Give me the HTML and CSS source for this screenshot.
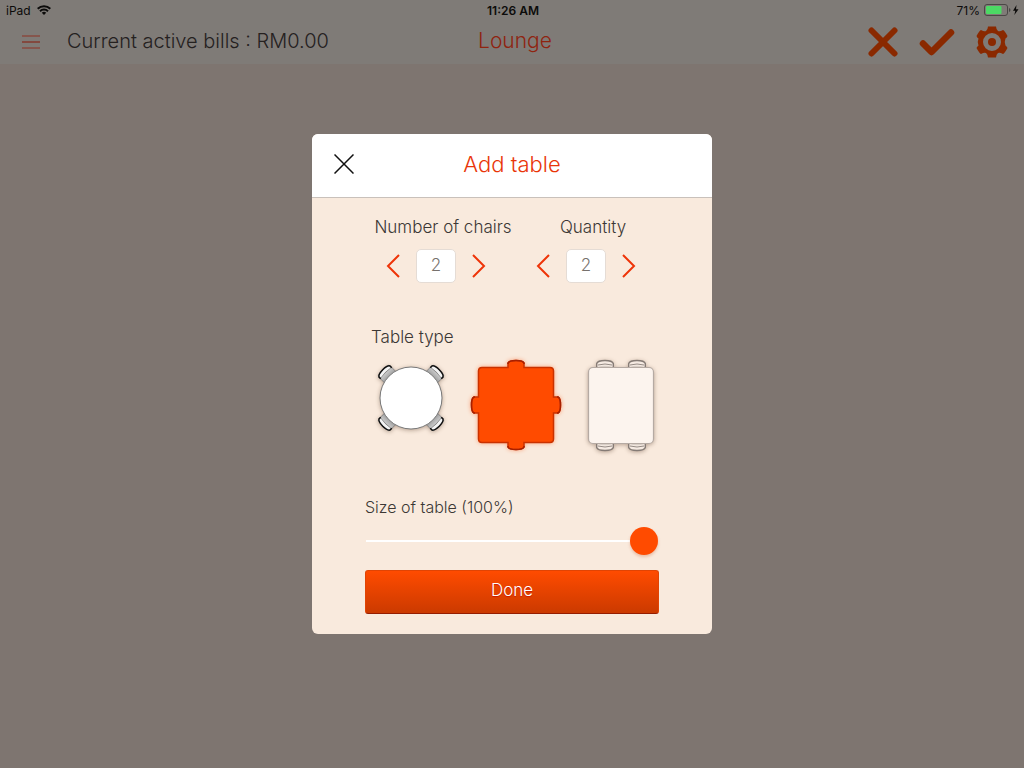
FILE: index.html
```html
<!DOCTYPE html>
<html lang="en">
<head>
<meta charset="utf-8">
<meta name="viewport" content="width=device-width, initial-scale=1">
<title>Lounge - Add table</title>
<link rel="stylesheet" href="styles.css">
</head>
<body>
<div class="app">
  <header class="topbar">
    <div class="status">
      <div class="status-left">iPad
        <svg width="14" height="10" viewBox="0 0 14 10" aria-hidden="true"><g fill="none" stroke="#0c0b0a" stroke-width="2"><path d="M.7 3.8a9 9 0 0 1 12.6 0"/><path d="M3 6.2a5.7 5.7 0 0 1 8 0"/></g><path d="M4.8 7.8a3.1 3.1 0 0 1 4.4 0L7 10z" fill="#0c0b0a"/></svg>
      </div>
      <div class="status-time">11:26 AM</div>
      <div class="status-right">71%
        <svg width="36" height="12" viewBox="0 0 36 12" aria-hidden="true"><rect x=".5" y=".5" width="23" height="11" rx="2.5" fill="none" stroke="#4a4745"/><rect x="2" y="2" width="15.500" height="8" rx="1" fill="#4cd964"/><path d="M25 4v4q1.500-.5 1.500-2T25 4z" fill="#4a4745"/><path d="M32.500 1 29 6.800h2.300L30.300 11 34.500 5.200H32z" fill="#0c0b0a"/></svg>
      </div>
    </div>
    <nav class="nav">
      <div class="nav-left">
        <button class="icon-button" aria-label="Menu"><svg width="18" height="14" viewBox="0 0 18 14"><path d="M0 1h18M0 13h18" stroke="#894b40" stroke-width="1.500"/><path d="M0 7h18" stroke="#86291a" stroke-width="1.200"/></svg></button>
        <span class="bills">Current active bills : RM0.00</span>
      </div>
      <h1 class="room">Lounge</h1>
      <div class="nav-actions">
        <button class="icon-button" aria-label="Cancel"><svg width="30" height="30" viewBox="0 0 30 30"><path d="M3.500 3.500l23 23M26.500 3.500l-23 23" stroke="#8a2900" stroke-width="6" stroke-linecap="round"/></svg></button>
        <button class="icon-button" aria-label="Confirm"><svg width="36" height="28" viewBox="0 0 36 28"><path d="M4 15.500l8.500 8.500L32 4.500" fill="none" stroke="#8a2900" stroke-width="6.500" stroke-linecap="round" stroke-linejoin="round"/></svg></button>
        <button class="icon-button" aria-label="Settings"><svg width="32" height="32" viewBox="0 0 32 32"><path fill="#8a2900" fill-rule="evenodd" d="M12 .5h8q.3 3.500 2 4.500t5-1q1.500.5 4.500 6-.5 1.500-2 2.500-1.500 3.500 0 7 1.500 1 2 2.500-3 5.500-4.500 6-3.300-2-5-1t-2 4.500h-8q-.3-3.500-2-4.500t-5 1Q3.500 27.500.5 22q.5-1.500 2-2.500-1.500-3.500 0-7Q1 11.500.5 10q3-5.500 4.500-6 3.300 2 5 1t2-4.500zM16 7a9 9 0 1 0 0 18a9 9 0 0 0 0-18z"/><circle cx="16" cy="16" r="4" fill="#8a2900"/></svg></button>
      </div>
    </nav>
  </header>

  <main class="stage">
    <form class="dialog" role="dialog" aria-labelledby="dialog-title">
      <div class="dialog-head">
        <button type="button" class="icon-button" aria-label="Close"><svg width="20" height="20" viewBox="0 0 20 20"><path d="M.5.5l19 19M19.500.5l-19 19" stroke="#111" stroke-width="1.500"/></svg></button>
        <h2 class="dialog-title" id="dialog-title">Add table</h2>
      </div>
      <div class="dialog-body">
        <div class="counters">
          <div class="counter">
            <label for="chairs">Number of chairs</label>
            <div class="stepper">
              <button type="button" class="icon-button" aria-label="Fewer chairs"><svg width="14" height="24" viewBox="0 0 14 24"><path d="M13 1 2 12l11 11" fill="none" stroke="#ee3408" stroke-width="2"/></svg></button>
              <input id="chairs" class="count" type="text" inputmode="numeric" value="2">
              <button type="button" class="icon-button" aria-label="More chairs"><svg width="14" height="24" viewBox="0 0 14 24"><path d="M1 1l11 11L1 23" fill="none" stroke="#ee3408" stroke-width="2"/></svg></button>
            </div>
          </div>
          <div class="counter">
            <label for="quantity">Quantity</label>
            <div class="stepper">
              <button type="button" class="icon-button" aria-label="Lower quantity"><svg width="14" height="24" viewBox="0 0 14 24"><path d="M13 1 2 12l11 11" fill="none" stroke="#ee3408" stroke-width="2"/></svg></button>
              <input id="quantity" class="count" type="text" inputmode="numeric" value="2">
              <button type="button" class="icon-button" aria-label="Higher quantity"><svg width="14" height="24" viewBox="0 0 14 24"><path d="M1 1l11 11L1 23" fill="none" stroke="#ee3408" stroke-width="2"/></svg></button>
            </div>
          </div>
        </div>

        <fieldset class="types">
          <legend class="types-label">Table type</legend>
          <div class="type-list">
            <label class="type">
              <input type="radio" name="type" value="round" aria-label="Round table">
              <svg class="shape" width="100" height="100" viewBox="0 0 100 100">
                <defs>
                  <linearGradient id="cushion" x2="0" y2="1"><stop stop-color="#ccc"/><stop offset="1" stop-color="#888"/></linearGradient>
                  <g id="seat"><path d="M-8-27v-9H8v9z" fill="url(#cushion)" stroke="#777" stroke-width=".7"/><path d="M-7.500-35.500q7.500-1.500 15 0v-3.500q-7.500-1.500-15 0z" fill="#f4f4f4" stroke="#777" stroke-width=".6"/><path d="M-7.800-35v-2.500q1.500-2.500 7.800-2.500t7.800 2.500v2.500" fill="none" stroke="#111" stroke-width="1.500"/></g>
                </defs>
                <g transform="translate(50 43)">
                  <use href="#seat" transform="rotate(45)"/><use href="#seat" transform="rotate(135)"/><use href="#seat" transform="rotate(225)"/><use href="#seat" transform="rotate(315)"/>
                  <circle r="31" fill="#fff" stroke="#777"/>
                </g>
              </svg>
            </label>
            <label class="type">
              <input type="radio" name="type" value="square" aria-label="Square table" checked>
              <svg class="shape shape-on" width="100" height="100" viewBox="0 0 100 100">
                <path d="M16 12.500h26V8q1-2.500 8-2.500t8 2.500v4.500h26q3.500 0 3.500 3.500v26H92q2.500 1 2.500 8t-2.500 8h-4.500v26q0 3.500-3.500 3.500H58V92q-1 2.500-8 2.500t-8-2.500v-4.500H16q-3.500 0-3.500-3.500V58H8q-2.500-1-2.500-8T8 42h4.500V16q0-3.500 3.500-3.500z" fill="#ff4b00" stroke="#c93200" stroke-width="1.500"/>
                <path d="M42 9v-1q1-2.500 8-2.500t8 2.500v1M91 42h1q2.500 1 2.500 8t-2.500 8h-1M58 91v1q-1 2.500-8 2.500t-8-2.500v-1M9 58H8q-2.500-1-2.500-8T8 42h1" fill="none" stroke="#a82000" stroke-width="1.500"/>
              </svg>
            </label>
            <label class="type">
              <input type="radio" name="type" value="rectangle" aria-label="Rectangular table">
              <svg class="shape" width="100" height="100" viewBox="0 0 100 100">
                <defs><g id="chair"><path d="M-8-3v7H8v-7z" fill="#d8cec6" stroke="#b9ada5" stroke-width=".6"/><path d="M-8 1v-3.500Q-7-5.500 0-5.500t8 3V1q-8-2.500-16 0" fill="#f5eae2"/><path d="M-8.300 1v-3.500q1-3 8.300-3t8.300 3V1" fill="none" stroke="#857b75" stroke-width="1.400"/><path d="M-7-1q7-2 14 0" fill="none" stroke="#958b85"/></g></defs>
                <use href="#chair" transform="translate(34 11)"/><use href="#chair" transform="translate(66 11)"/>
                <use href="#chair" transform="translate(34 90)scale(1 -1)"/><use href="#chair" transform="translate(66 90)scale(1 -1)"/>
                <rect x="17.500" y="12.500" width="65" height="76" rx="4.500" fill="#fcf4ee" stroke="#b5aaa3" stroke-width="1.200"/>
              </svg>
            </label>
          </div>
        </fieldset>

        <label class="size-label" for="size">Size of table (100%)</label>
        <input id="size" class="slider" type="range" min="10" max="100" value="100">
        <button type="submit" class="done">Done</button>
      </div>
    </form>
  </main>
</div>
</body>
</html>
```
FILE: styles.css
```css
* {
  box-sizing: border-box;
}

body {
  margin: 0;
  background: #7e7570;
  color: #3c3835;
  font-family: Inter, "Liberation Sans", sans-serif;
  font-size: 16px;
  font-weight: 300;
}

button,
input {
  font: inherit;
}

.app {
  display: grid;
  min-height: 100vh;
}

.topbar,
.stage {
  grid-area: 1 / 1;
}

.topbar {
  align-self: start;
  background: #7f7b77;
}

.status {
  display: grid;
  grid-template-columns: 1fr auto 1fr;
  align-items: center;
  height: 20px;
  padding: 0 4px 0 6px;
  color: #0c0b0a;
  font-size: 12px;
  font-weight: 400;
}

.status-left,
.status-right {
  display: flex;
  align-items: center;
  gap: 6px;
}

.status-right {
  justify-content: flex-end;
  gap: 4px;
}

.status-time {
  font-weight: 600;
}

.nav {
  display: grid;
  grid-template-columns: 1fr auto 1fr;
  align-items: center;
  height: 44px;
  padding: 0 16px 0 22px;
}

.nav-left {
  display: flex;
  align-items: center;
  gap: 27px;
}

.bills {
  padding-bottom: 3px;
  color: #25211f;
  font-size: 20px;
  white-space: nowrap;
}

.room {
  margin: 0;
  padding-bottom: 3px;
  color: #8f2410;
  font-size: 21px;
  font-weight: 300;
}

.nav-actions {
  display: flex;
  align-items: center;
  justify-content: flex-end;
  gap: 21px;
}

.icon-button {
  display: flex;
  padding: 0;
  border: 0;
  background: none;
  cursor: pointer;
}

.stage {
  display: grid;
  place-items: center;
}

.dialog {
  z-index: 1;
  width: 400px;
  max-width: 100%;
  overflow: hidden;
  border-radius: 6px;
  background: #f9eadd;
}

.dialog-head {
  display: grid;
  grid-template-columns: 1fr auto 1fr;
  align-items: center;
  height: 64px;
  padding: 0 22px 4px;
  border-bottom: 1px solid #c9c1bb;
  background: #fff;
}

.dialog-title {
  margin: 0;
  color: #e93508;
  font-size: 22px;
  font-weight: 300;
}

.dialog-body {
  display: flex;
  flex-direction: column;
  padding: 19px 53px 20px;
}

.counters {
  display: grid;
  grid-template-columns: 150px 150px;
  justify-content: end;
  margin-right: -9px;
  font-size: 17px;
}

.counter {
  display: flex;
  flex-direction: column;
  align-items: center;
  gap: 12px;
  line-height: 20px;
}

.stepper {
  display: flex;
  align-items: center;
  gap: 16px;
  padding-right: 14px;
}

.count {
  width: 40px;
  height: 34px;
  padding: 0 0 2px;
  border: 1px solid #e5dcd5;
  border-radius: 5px;
  background: #fff;
  color: #77716d;
  text-align: center;
}

.types {
  min-width: 0;
  margin: 44px 0 0;
  padding: 0;
  border: 0;
}

.types-label {
  padding: 0 0 8px 6px;
  font-size: 17px;
  line-height: 20px;
}

.type-list {
  display: flex;
  justify-content: end;
  gap: 5px;
  margin-right: -12px;
}

.type {
  position: relative;
  display: flex;
  cursor: pointer;
}

.type input {
  position: absolute;
  opacity: 0;
}

.shape {
  overflow: visible;
  filter: drop-shadow(0 1px 2px rgb(60 30 10 / 35%));
}

.shape-on {
  filter: drop-shadow(0 0 2px rgb(255 75 0 / 45%));
}

.size-label {
  margin-top: 42px;
  line-height: 20px;
}

.slider {
  height: 28px;
  margin: 10px 1px 15px;
  appearance: none;
  background: none;
}

.slider::-webkit-slider-runnable-track {
  height: 2px;
  background: #fff;
}

.slider::-webkit-slider-thumb {
  width: 28px;
  height: 28px;
  margin-top: -13px;
  appearance: none;
  border-radius: 50%;
  background: #ff4b00;
  box-shadow: 0 2px 3px rgb(200 90 40 / 30%);
}

.done {
  height: 44px;
  padding: 0 0 4px;
  border: 1px solid #e04404;
  border-bottom-color: #951d00;
  border-radius: 3px;
  background: linear-gradient(#ff4b00, #cb3a00);
  color: #fff;
  font-size: 17px;
  text-shadow: 0 1px 1px rgb(180 0 0 / 60%);
  cursor: pointer;
}
```
